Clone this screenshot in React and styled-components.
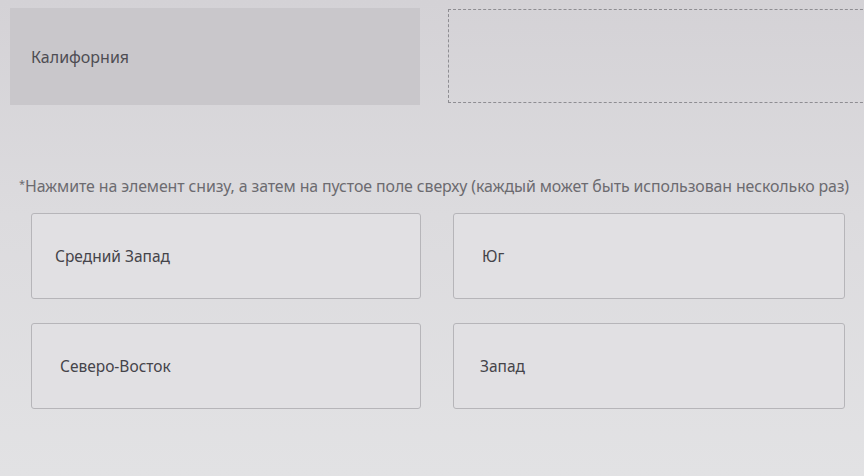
import React from "react";
import styled, { createGlobalStyle } from "styled-components";

const Global = createGlobalStyle`
  html, body { margin: 0; padding: 0; }
  body {
    background: #dcdbde;
    font-family: "Noto Sans", "Open Sans", sans-serif;
    overflow: hidden;
  }
`;

const Page = styled.div`
  width: 864px;
  height: 476px;
  overflow: hidden;
  background: linear-gradient(180deg, #d4d2d6 0%, #dcdbde 45%, #e2e2e4 100%);
  display: flex;
  flex-direction: column;
`;

const TopRow = styled.div`
  display: flex;
  gap: 28px;
  padding: 8px 0 0 10px;
  align-items: flex-start;
`;

const Answer = styled.div`
  flex: 0 0 410px;
  height: 97px;
  background: #c9c7cb;
  display: flex;
  align-items: center;
  padding-left: 21px;
  box-sizing: border-box;
  font-size: 16px;
  color: #4e4d53;
`;

const DropZone = styled.div`
  flex: 0 0 430px;
  height: 94px;
  margin-top: 1px;
  border: 1px dashed #8e8d92;
  box-sizing: border-box;
`;

const Hint = styled.div`
  margin: 70px 0 0 19px;
  font-size: 15.9px;
  color: #6c6b70;
  white-space: nowrap;
  letter-spacing: -0.1px;
`;

const Star = styled.span`
  font-size: 11px;
  vertical-align: 4px;
`;

const Grid = styled.div`
  display: grid;
  grid-template-columns: 390px 392px;
  column-gap: 32px;
  row-gap: 24px;
  padding: 16px 0 0 31px;
`;

const Option = styled.div`
  height: 86px;
  border: 1px solid #b6b5b9;
  border-radius: 3px;
  background: #e1e0e3;
  display: flex;
  align-items: center;
  padding-left: ${(p) => p.$pad}px;
  box-sizing: border-box;
  font-size: 15.5px;
  color: #45444a;
`;

export default function App() {
  return (
    <>
      <Global />
      <Page>
        <TopRow>
          <Answer>Калифорния</Answer>
          <DropZone />
        </TopRow>
        <Hint>
          <Star>*</Star>Нажмите на элемент снизу, а затем на пустое поле сверху (каждый может быть использован несколько раз)
        </Hint>
        <Grid>
          <Option $pad={23}>Средний Запад</Option>
          <Option $pad={28}>Юг</Option>
          <Option $pad={28}>Северо-Восток</Option>
          <Option $pad={26}>Запад</Option>
        </Grid>
      </Page>
    </>
  );
}
